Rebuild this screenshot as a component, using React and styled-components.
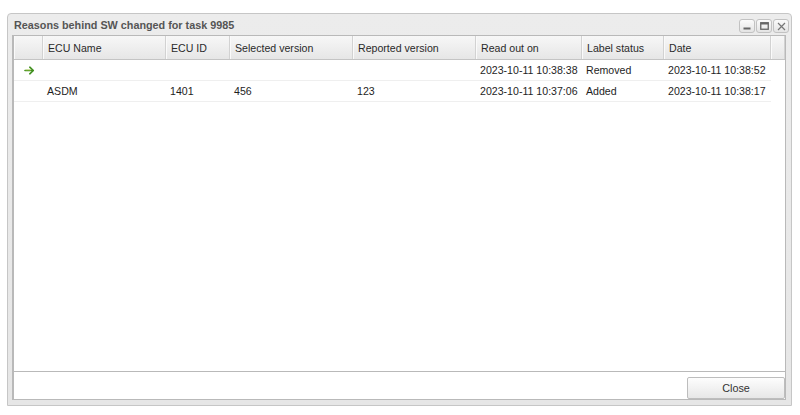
import React from "react";
import styled, { createGlobalStyle } from "styled-components";

const GlobalStyle = createGlobalStyle`
  html, body {
    margin: 0;
    padding: 0;
    background: #ffffff;
    font-family: "Liberation Sans", Arial, sans-serif;
  }
`;

const columns = [
  { key: "mark", title: "", width: 29 },
  { key: "name", title: "ECU Name", width: 123 },
  { key: "id", title: "ECU ID", width: 64 },
  { key: "selected", title: "Selected version", width: 123 },
  { key: "reported", title: "Reported version", width: 123 },
  { key: "readOut", title: "Read out on", width: 106 },
  { key: "label", title: "Label status", width: 82 },
  { key: "date", title: "Date", width: 107 },
];

const rows = [
  {
    mark: true,
    name: "",
    id: "",
    selected: "",
    reported: "",
    readOut: "2023-10-11 10:38:38",
    label: "Removed",
    date: "2023-10-11 10:38:52",
  },
  {
    mark: false,
    name: "ASDM",
    id: "1401",
    selected: "456",
    reported: "123",
    readOut: "2023-10-11 10:37:06",
    label: "Added",
    date: "2023-10-11 10:38:17",
  },
];

const Page = styled.div`
  padding: 13px 0 0 7px;
`;

const Window = styled.div`
  width: 785px;
  height: 393px;
  box-sizing: border-box;
  border: 1px solid #c6c6c6;
  border-radius: 4px 4px 0 0;
  background: linear-gradient(#ececec, #e6e6e6);
  padding: 0 5px 5px 4px;
  display: flex;
  flex-direction: column;
`;

const TitleBar = styled.div`
  height: 21px;
  display: flex;
  align-items: center;
  justify-content: space-between;
  padding-left: 2px;
`;

const Title = styled.span`
  font-size: 10.8px;
  font-weight: bold;
  color: #555555;
  margin-top: 1px;
`;

const Tools = styled.div`
  display: flex;
  gap: 1px;
  margin-right: -3px;
  margin-top: 3px;
`;

const ToolButton = styled.div`
  width: 14px;
  height: 12px;
  border: 1px solid #c2c2c2;
  border-radius: 3px;
  background: linear-gradient(#fbfbfb, #e4e4e4);
  display: flex;
  align-items: center;
  justify-content: center;
`;

const Body = styled.div`
  flex: 1;
  display: flex;
  flex-direction: column;
  background: #ffffff;
  border: 1px solid #b9b9b9;
  border-left-width: 2px;
`;

const Grid = styled.div`
  flex: 1;
  border-bottom: 1px solid #b9b9b9;
  display: flex;
  flex-direction: column;
`;

const HeaderRow = styled.div`
  display: flex;
  height: 23px;
  border-bottom: 1px solid #c4c4c4;
  background: linear-gradient(#f7f7f7, #e6e6e6);
`;

const HeaderCell = styled.div`
  width: ${(p) => p.$w}px;
  flex: ${(p) => (p.$fill ? "1" : "none")};
  box-sizing: border-box;
  border-right: 1px solid #d2d2d2;
  box-shadow: inset 1px 0 0 #fafafa;
  font-size: 10.6px;
  color: #2a2a2a;
  display: flex;
  align-items: center;
  padding-left: 5px;
  white-space: nowrap;
`;

const DataRow = styled.div`
  display: flex;
  height: 21px;
  width: 757px;
  box-sizing: border-box;
  border-bottom: 1px solid #efefef;
`;

const Cell = styled.div`
  width: ${(p) => p.$w}px;
  flex: none;
  box-sizing: border-box;
  padding-left: ${(p) => (p.$mark ? 10 : 4)}px;
  font-size: 10.6px;
  color: #1e1e1e;
  display: flex;
  align-items: center;
  white-space: nowrap;
  overflow: hidden;
`;

const Footer = styled.div`
  height: 27px;
  display: flex;
  align-items: flex-end;
  justify-content: flex-end;
`;

const Button = styled.button`
  width: 98px;
  height: 22px;
  border: 1px solid #bdbdbd;
  border-radius: 2px;
  background: linear-gradient(#fdfdfd, #e7e7e7);
  font-family: "Liberation Sans", Arial, sans-serif;
  font-size: 10.8px;
  color: #333333;
  padding: 0;
  margin-right: 0;
`;

const Arrow = () => (
  <svg width="11" height="9" viewBox="0 0 11 9">
    <path d="M1 4.5 H9" stroke="#3f8f1f" strokeWidth="1.6" strokeLinecap="round" />
    <path d="M5.8 1.2 L9.3 4.5 L5.8 7.8" fill="none" stroke="#3f8f1f" strokeWidth="1.6" strokeLinecap="round" strokeLinejoin="round" />
    <path d="M1.5 4 H7" stroke="#c9d64a" strokeWidth="0.6" />
  </svg>
);

const MinIcon = () => (
  <svg width="8" height="8" viewBox="0 0 8 8">
    <rect x="0.5" y="5.5" width="7" height="2" fill="#666" />
  </svg>
);

const MaxIcon = () => (
  <svg width="9" height="8" viewBox="0 0 9 8">
    <rect x="0.75" y="0.75" width="7.5" height="6.5" fill="none" stroke="#666" strokeWidth="1.3" />
    <rect x="0.5" y="0.5" width="8" height="2" fill="#666" />
  </svg>
);

const CloseIcon = () => (
  <svg width="9" height="9" viewBox="0 0 9 9">
    <path d="M1 1 L8 8 M8 1 L1 8" stroke="#777" strokeWidth="1.2" />
  </svg>
);

export default function App() {
  return (
    <Page>
      <GlobalStyle />
      <Window>
        <TitleBar>
          <Title>Reasons behind SW changed for task 9985</Title>
          <Tools>
            <ToolButton>
              <MinIcon />
            </ToolButton>
            <ToolButton>
              <MaxIcon />
            </ToolButton>
            <ToolButton>
              <CloseIcon />
            </ToolButton>
          </Tools>
        </TitleBar>
        <Body>
          <Grid>
            <HeaderRow>
              {columns.map((c) => (
                <HeaderCell key={c.key} $w={c.width}>
                  {c.title}
                </HeaderCell>
              ))}
              <HeaderCell $w={16} $fill />
            </HeaderRow>
            {rows.map((r, i) => (
              <DataRow key={i}>
                {columns.map((c) => (
                  <Cell key={c.key} $w={c.width} $mark={c.key === "mark"}>
                    {c.key === "mark" ? r.mark && <Arrow /> : r[c.key]}
                  </Cell>
                ))}
              </DataRow>
            ))}
          </Grid>
          <Footer>
            <Button>Close</Button>
          </Footer>
        </Body>
      </Window>
    </Page>
  );
}
